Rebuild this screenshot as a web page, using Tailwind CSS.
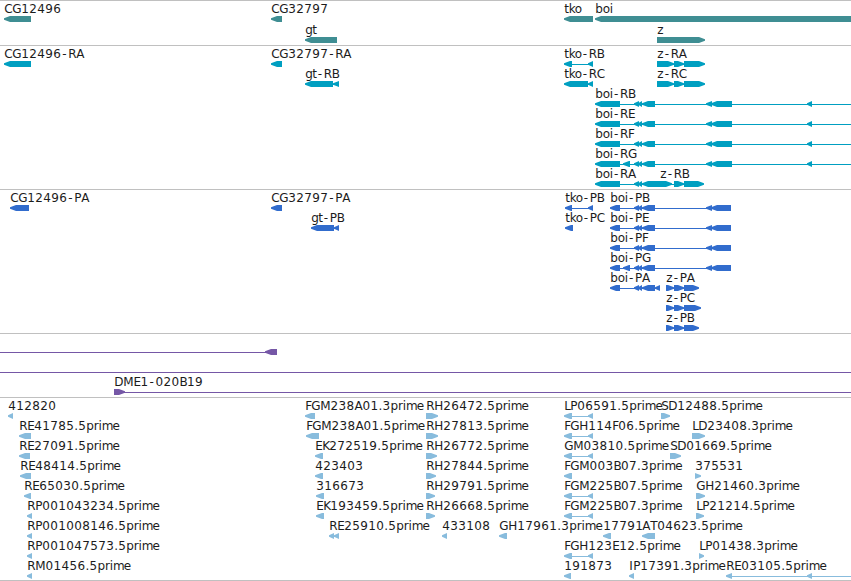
<!DOCTYPE html>
<html lang="en"><head><meta charset="utf-8"><title>Genome tracks</title>
<script src="https://cdn.jsdelivr.net/npm/@tailwindcss/browser@4"></script></head>
<body class="bg-white overflow-hidden">
<main id="tracks" class="flex flex-col w-[851px] h-[581px] bg-white border-b border-[#c0c0c0] font-['DejaVu_Sans',sans-serif] text-[12px] text-black"></main>
<script>
// Each feature: [row, label, direction, exon ranges, optional line end, optional label x]
const rna = '634-639 638-642 642-655';
const boiR = '595-620 ' + rna + ' 706-712 711-732 807-812';
const boiP = '610-620 ' + rna + ' 706-712 711-731';
const zR = '657-674 674-684 684-705';
const tk = '564-572 588-593';
const tracks = [
 {top:0, end:45, base:13, pitch:21, color:'#3f8e93', f:[
  [0,'CG12496','<','4-31'],[0,'CG32797','<','271-282'],[0,'tko','<','564-593'],[0,'boi','<','595-860'],
  [1,'gt','<','305-337'],[1,'z','>','657-705']]},
 {top:45, end:189, base:58, pitch:20, color:'#009fc1', f:[
  [0,'CG12496-RA','<','4-31'],[0,'CG32797-RA','<','271-282'],[0,'tko-RB','<',tk],[0,'z-RA','>',zR],
  [1,'gt-RB','<','305-333 333-339'],[1,'tko-RC','<','564-588 588-593'],[1,'z-RC','>',zR],
  [2,'boi-RB','<',boiR,851],[3,'boi-RE','<',boiR,851],[4,'boi-RF','<',boiR,851],[5,'boi-RG','<',boiR+' 623-630',851],
  [6,'boi-RA','<','595-620 '+rna],[6,'z-RB','>','655-672 674-684 684-704',0,660]]},
 {top:189, end:333, base:202, pitch:20, color:'#316ccd', f:[
  [0,'CG12496-PA','<','10-29'],[0,'CG32797-PA','<','271-282'],[0,'tko-PB','<','565-572 588-593'],[0,'boi-PB','<',boiP],
  [1,'gt-PB','<','311-334 334-339'],[1,'tko-PC','<','565-573'],[1,'boi-PE','<',boiP],
  [2,'boi-PF','<',boiP],[3,'boi-PG','<',boiP+' 623-630'],
  [4,'boi-PA','<','610-620 '+rna+' 655-660'],[4,'z-PA','>','666-674 674-684 684-699'],
  [5,'z-PC','>','666-674 674-684 684-701'],[6,'z-PB','>','666-674 674-684 684-699']]},
 {top:333, end:397, base:346, pitch:20, color:'#7557a6', f:[
  [0,'','<','265-277',-1],[1,'','-','',851],[2,'DME1-020B19','>','114-125',851]]},
 {top:397, end:580, base:410, pitch:20, color:'#88bcdd', f:[
  [0,'412820','<','8-13'],[0,'FGM238A01.3prime','<','305-315'],[0,'RH26472.5prime','>','426-438'],[0,'LP06591.5prime','<',tk],[0,'SD12488.5prime','>','661-670'],
  [1,'RE41785.5prime','<','19-31'],[1,'FGM238A01.5prime','<','306-319'],[1,'RH27813.5prime','>','426-438'],[1,'FGH114F06.5prime','<',tk],[1,'LD23408.3prime','>','692-705'],
  [2,'RE27091.5prime','<','19-30'],[2,'EK272519.5prime','<','315-323'],[2,'RH26772.5prime','>','426-437'],[2,'GM03810.5prime','<',tk],[2,'SD01669.5prime','>','670-681'],
  [3,'RE48414.5prime','<','20-31'],[3,'423403','<','315-323'],[3,'RH27844.5prime','>','426-436'],[3,'FGM003B07.3prime','<','564-572'],[3,'375531','>','695-701'],
  [4,'RE65030.5prime','<','24-31'],[4,'316673','<','316-324'],[4,'RH29791.5prime','>','426-435'],[4,'FGM225B07.5prime','<',tk],[4,'GH21460.3prime','>','696-705'],
  [5,'RP001043234.5prime','<','27-32'],[5,'EK193459.5prime','<','316-324'],[5,'RH26668.5prime','>','426-435'],[5,'FGM225B07.3prime','<',tk],[5,'LP21214.5prime','>','696-704'],
  [6,'RP001008146.5prime','<','27-32'],[6,'RE25910.5prime','<','329-334 334-339'],[6,'433108','<','442-447'],[6,'GH17961.3prime','<','499-507'],[6,'17791','<','603-611'],[6,'AT04623.5prime','<','642-655'],
  [7,'RP001047573.5prime','<','27-32'],[7,'FGH123E12.5prime','<',tk],[7,'LP01438.3prime','>','699-704'],
  [8,'RM01456.5prime','<','27-32'],[8,'191873','<','564-571'],[8,'IP17391.3prime','<','629-634'],[8,'RE03105.5prime','<','726-732 807-812',851]]}
];
const adv = {C:8,G:9,R:8,A:8,B:7.5,E:7,F:6,H:9,M:10.3,P:7,L:6,D:9,S:7,K:7,T:7,I:4,'-':7,'.':4,t:4.5,k:6,o:7,b:7.5,i:3.3,g:7,z:6.5,p:7.5,r:4.7,m:10.7,e:7};
function label(s, x, y) {
  let p = x + .2; const xs = [];
  for (const c of s) { xs.push((c === '-' ? p + 1 : p).toFixed(1)); p += adv[c] ?? 8; }
  return `<text x="${xs.join(' ')}" y="${y}" fill="#1c1c1c">${s}</text>`;
}
document.getElementById('tracks').innerHTML = tracks.map(t => {
  let g = '';
  for (const [row, name, dir, ranges, lineEnd, lx] of t.f) {
    const base = t.base + row * t.pitch, y = base + 3;
    const ex = ranges ? ranges.split(' ').map(r => r.split('-').map(Number)) : [];
    let a = Math.min(...ex.map(e => e[0])), b = Math.max(...ex.map(e => e[1]));
    const start = a;
    if (lineEnd === -1) a = 0;
    if (lineEnd > 0) b = lineEnd;
    if (dir === '-') a = 0;
    const inset = lineEnd === -1 || dir === '-' ? 0 : 1;
    const ly = dir === '-' ? 372 : y + 3;
    if (ex.length !== 1 || lineEnd) g += `<rect x="${a + inset}" y="${ly}" width="${b - a - 2 * inset + (lineEnd > 0 ? inset : 0)}" height="1"/>`;
    for (const [p, q] of ex) {
      const n = Math.min(6, q - p);
      g += dir === '<' ? `<polygon points="${p},${y+3.7} ${p},${y+2.3} ${p+n},${y} ${q},${y} ${q},${y+6} ${p+n},${y+6}"/>`
                       : `<polygon points="${q},${y+3.7} ${q},${y+2.3} ${q-n},${y} ${p},${y} ${p},${y+6} ${q-n},${y+6}"/>`;
    }
    if (name) g += label(name, lx || start, base);
  }
  const h = t.end - t.top - 1;
  return `<section class="shrink-0 border-t border-[#c0c0c0]"><svg class="block" width="851" height="${h}" viewBox="0 ${t.top + 1} 851 ${h}" fill="${t.color}">${g}</svg></section>`;
}).join('');
</script></body></html>
